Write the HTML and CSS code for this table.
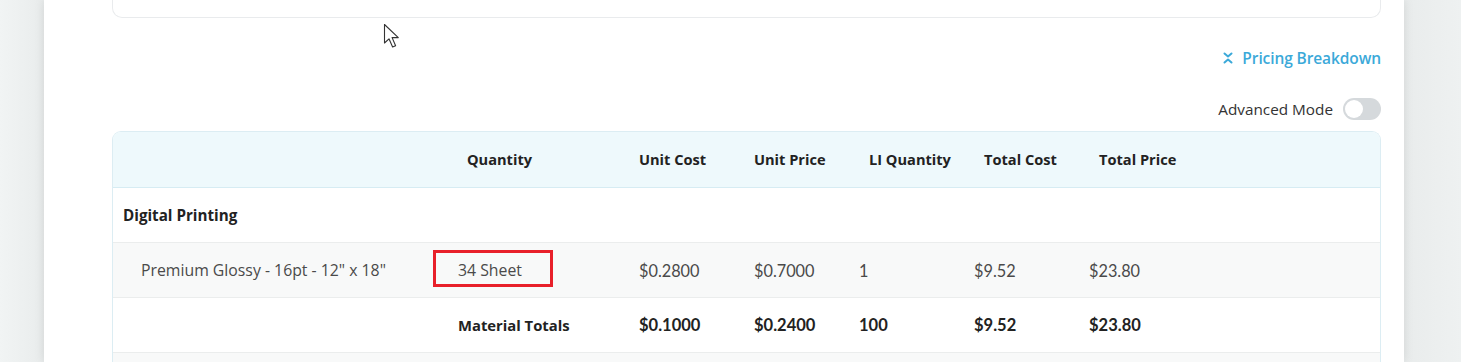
FILE: index.html
```html
<!DOCTYPE html>
<html>
<head>
<meta charset="utf-8">
<link rel="stylesheet" href="styles.css">
</head>
<body>
<div class="page">
  <div class="panel">
    <div class="top-card"></div>
    <div class="link-row">
      <a class="breakdown">
        <svg class="collapse-icon" width="10" height="12" viewBox="0 0 10 12" fill="none" stroke="#3ba9d9" stroke-width="2" stroke-linecap="round" stroke-linejoin="round"><path d="M1.5 1.5 L5 4.5 L8.5 1.5"/><path d="M1.5 10.5 L5 7.5 L8.5 10.5"/></svg>
        Pricing Breakdown
      </a>
    </div>
    <div class="mode-row">
      <span class="mode-label">Advanced Mode</span>
      <span class="toggle"><span class="knob"></span></span>
    </div>
    <div class="table">
      <div class="thead">
        <div></div>
        <div>Quantity</div>
        <div>Unit Cost</div>
        <div>Unit Price</div>
        <div>LI Quantity</div>
        <div>Total Cost</div>
        <div>Total Price</div>
        <div></div>
      </div>
      <div class="row group">
        <div class="name">Digital Printing</div>
        <div></div><div></div><div></div><div></div><div></div><div></div><div></div>
      </div>
      <div class="row item">
        <div class="name sub">Premium Glossy - 16pt - 12" x 18"</div>
        <div class="qty"><span class="highlight"></span>34 Sheet</div>
        <div class="num">$0.2800</div>
        <div class="num">$0.7000</div>
        <div class="num">1</div>
        <div class="num">$9.52</div>
        <div class="num">$23.80</div>
        <div></div>
      </div>
      <div class="row totals">
        <div></div>
        <div class="label">Material Totals</div>
        <div>$0.1000</div>
        <div>$0.2400</div>
        <div>100</div>
        <div>$9.52</div>
        <div>$23.80</div>
        <div></div>
      </div>
      <div class="row item empty">
        <div></div><div></div><div></div><div></div><div></div><div></div><div></div><div></div>
      </div>
    </div>
  </div>
  <svg class="cursor" width="20" height="28" viewBox="0 0 20 28"><path d="M1.5 1.5 L1.5 20 L6 15.8 L9.6 24 L12.6 22.7 L9.1 14.6 L15.3 14.6 Z" fill="#fff" stroke="#333" stroke-width="1.1" stroke-linejoin="round"/></svg>
</div>
</body>
</html>
```

FILE: styles.css
```css
* { box-sizing: border-box; }
html, body { margin: 0; padding: 0; }
body {
  background: #eef1f2;
  font-family: "Open Sans", "Noto Sans", sans-serif;
  color: #222;
  overflow: hidden;
}
.page {
  position: relative;
  width: 1461px;
  height: 362px;
  background: linear-gradient(90deg, #f1f4f4 0px, #e9ecec 44px, #e9ecec 1404px, #eef1f1 1461px);
}
.panel {
  margin-left: 44px;
  width: 1360px;
  height: 362px;
  background: #fff;
  padding: 0 23px 0 68px;
  box-shadow: 0 0 10px rgba(0,0,0,0.10);
  overflow: hidden;
}
.top-card {
  height: 18px;
  border: 1px solid #e9ebed;
  border-top: none;
  border-radius: 0 0 10px 10px;
}
.link-row {
  display: flex;
  justify-content: flex-end;
  margin-top: 30px;
  height: 20px;
  align-items: center;
}
.breakdown {
  display: flex;
  align-items: center;
  gap: 9px;
  color: #3ba9d9;
  font-weight: 600;
  font-size: 15.5px;
  letter-spacing: -0.1px;
}
.collapse-icon { display: block; }
.mode-row {
  display: flex;
  justify-content: flex-end;
  align-items: center;
  gap: 10px;
  margin-top: 29px;
  height: 24px;
}
.mode-label {
  font-size: 15.3px;
  color: #333;
}
.toggle {
  width: 38px;
  height: 22px;
  border-radius: 11px;
  background: #d5d9dc;
  display: flex;
  align-items: center;
  padding: 2px;
}
.knob {
  width: 18px;
  height: 18px;
  border-radius: 50%;
  background: #fff;
}
.table {
  margin-top: 10px;
  border: 1px solid #dcedf3;
  border-bottom: none;
  border-radius: 9px 9px 0 0;
  overflow: hidden;
}
.thead {
  display: grid;
  grid-template-columns: 344px 172px 115px 115px 115px 115px 115px 1fr;
  height: 56px;
  padding-bottom: 2px;
  align-items: center;
  background: #eef9fc;
  border-bottom: 1px solid #d6ecf3;
  font-weight: 700;
  font-size: 14.6px;
}
.thead > div { padding-left: 10px; }
.row {
  display: grid;
  grid-template-columns: 335px 181px 115px 105px 115px 115px 115px 1fr;
  height: 55px;
  align-items: center;
  border-bottom: 1px solid #ebeded;
  font-size: 15.2px;
}
.row > div { padding-left: 10px; }
.row.group { background: #fff; font-weight: 700; }
.row.item { background: #f8f9f9; color: #4a4a4a; }
.row.totals { background: #fff; font-weight: 700; }
.name.sub { padding-left: 28px; font-size: 15.8px; }
.qty { font-size: 15.8px; }
.num { font-family: Lato, "Open Sans", sans-serif; font-size: 16.3px; }
.totals > div { font-family: Lato, "Open Sans", sans-serif; font-size: 16.5px; font-weight: 700; }
.totals > .label { font-family: "Open Sans", sans-serif; font-size: 14.8px; }
.qty { position: relative; }
.highlight {
  position: absolute;
  left: -15px;
  top: -9px;
  width: 120px;
  height: 37px;
  border: 3px solid #e8202a;
}
.cursor {
  position: absolute;
  left: 383px;
  top: 23px;
}
```
